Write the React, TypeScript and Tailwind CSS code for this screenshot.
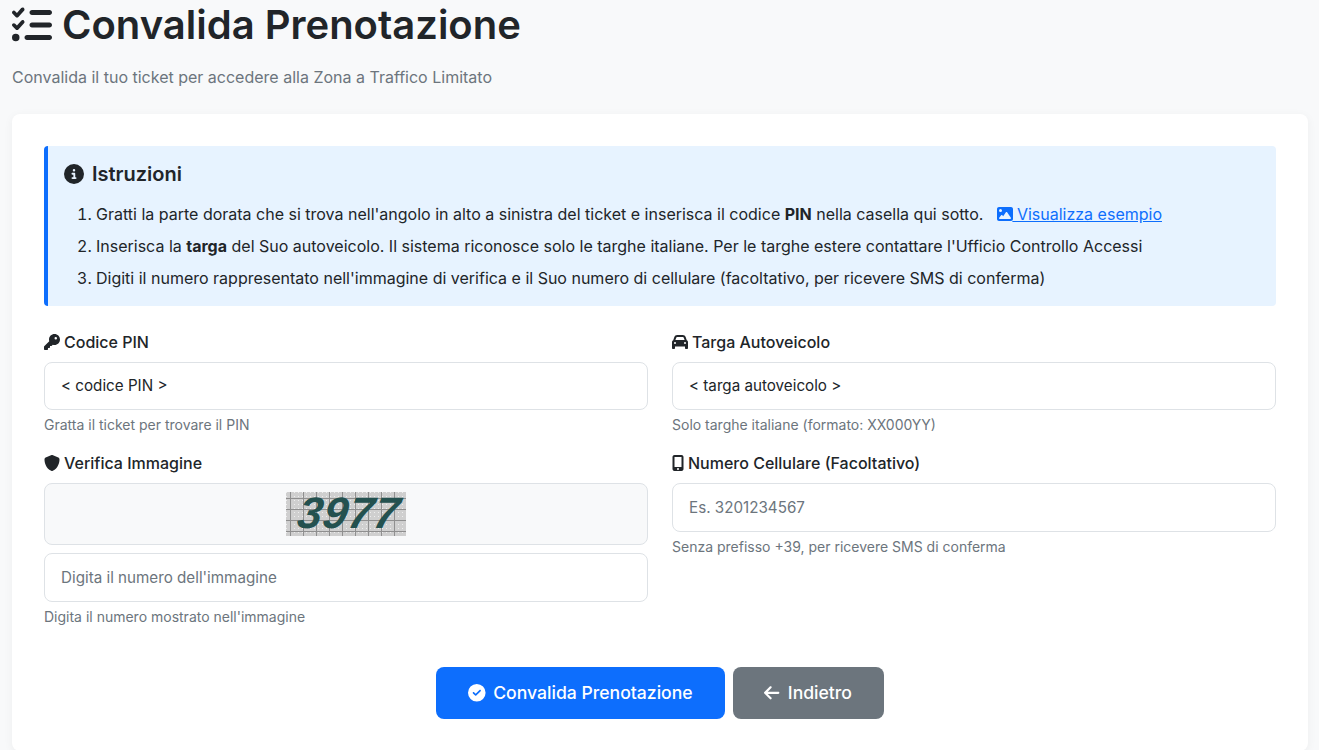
import { useState } from "react";
import type { ReactNode } from "react";
import {
  FaArrowLeft,
  FaCar,
  FaCircleCheck,
  FaCircleInfo,
  FaImage,
  FaKey,
  FaListCheck,
  FaMobileScreenButton,
  FaShield,
} from "react-icons/fa6";

type FieldProps = {
  icon: ReactNode;
  label: string;
  help: string;
  children: ReactNode;
};

function Field({ icon, label, help, children }: FieldProps) {
  return (
    <div className="flex flex-col">
      <label className="mb-2 flex h-6 items-center gap-1 text-[16px] font-medium text-[#212529]">
        {icon}
        {label}
      </label>
      {children}
      <div className="mt-1 text-[14px] leading-[21px] text-[#6c757d]">{help}</div>
    </div>
  );
}

function TextInput({ value, placeholder }: { value?: string; placeholder?: string }) {
  const [text, setText] = useState(value ?? "");
  return (
    <input
      type="text"
      value={text}
      placeholder={placeholder}
      onChange={(e) => setText(e.target.value)}
      className="w-full rounded-lg border border-[#dee2e6] bg-white px-4 pt-[12.6px] pb-[11.4px] text-[15.2px] leading-[22.8px] text-[#212529] outline-none placeholder:text-[#6c757d]"
    />
  );
}

function Captcha() {
  const cols = Array.from({ length: 9 }, (_, i) => 4 + i * 13);
  const rows = Array.from({ length: 4 }, (_, i) => 6 + i * 11);
  return (
    <svg width="120" height="44" viewBox="0 0 120 44" className="block overflow-visible">
      <defs>
        <pattern id="dots" width="4" height="4" patternUnits="userSpaceOnUse">
          <rect width="4" height="4" fill="#cfcfcf" />
          <rect width="1" height="1" fill="#eeeeee" />
        </pattern>
      </defs>
      <rect width="120" height="44" fill="url(#dots)" />
      {cols.map((x) => (
        <line key={x} x1={x + 0.5} y1="0" x2={x + 0.5} y2="44" stroke="#8f8f8f" strokeWidth="1" />
      ))}
      {rows.map((y) => (
        <line key={y} x1="0" y1={y + 0.5} x2="120" y2={y + 0.5} stroke="#8f8f8f" strokeWidth="1" />
      ))}
      <text
        x="16"
        y="36"
        transform="skewX(-10)"
        fontFamily="'Liberation Sans', sans-serif"
        fontSize="44"
        fontStyle="italic"
        fontWeight="700"
        fill="#24514f"
        letterSpacing="1"
      >
        3977
      </text>
    </svg>
  );
}

export default function App() {
  return (
    <div className="min-h-screen w-[1320px] overflow-hidden bg-[#f8f9fa] px-3 font-['Inter',sans-serif] text-[#212529]">
      <h1 className="flex h-[50px] items-center gap-2.5 text-[40px] font-semibold leading-[48px] text-[#212529]">
        <FaListCheck className="h-10 w-10" />
        Convalida Prenotazione
      </h1>
      <p className="mt-[15px] text-[16px] leading-6 text-[#6c757d]">
        Convalida il tuo ticket per accedere alla Zona a Traffico Limitato
      </p>

      <div className="mt-[25px] rounded-lg bg-white p-8 shadow-[0_2px_10px_rgba(0,0,0,0.05)]">
        <div className="rounded-[4px] border-l-4 border-[#0d6efd] bg-[#e7f3ff] p-4">
          <h5 className="mb-4 flex h-6 items-center gap-2 text-[20px] font-semibold text-[#212529]">
            <FaCircleInfo className="h-5 w-5" />
            Istruzioni
          </h5>
          <ol className="list-decimal pl-8 text-[16px] leading-[24px]">
            <li className="mb-2">
              Gratti la parte dorata che si trova nell'angolo in alto a sinistra del ticket e
              inserisca il codice <strong className="font-bold">PIN</strong> nella casella qui
              sotto.
              <a href="#" className="ml-[14px] text-[#0d6efd] underline">
                <FaImage className="mr-[-1px] inline h-4 w-4 align-[-2px]" /> Visualizza esempio
              </a>
            </li>
            <li className="mb-2">
              Inserisca la <strong className="font-bold">targa</strong> del Suo autoveicolo. Il
              sistema riconosce solo le targhe italiane. Per le targhe estere contattare l'Ufficio
              Controllo Accessi
            </li>
            <li>
              Digiti il numero rappresentato nell'immagine di verifica e il Suo numero di cellulare
              (facoltativo, per ricevere SMS di conferma)
            </li>
          </ol>
        </div>

        <div className="mt-[23.6px] grid grid-cols-2 items-start gap-x-6 gap-y-4">
          <Field
            icon={<FaKey className="h-4 w-4" />}
            label="Codice PIN"
            help="Gratta il ticket per trovare il PIN"
          >
            <TextInput value="< codice PIN >" />
          </Field>
          <Field
            icon={<FaCar className="h-4 w-4" />}
            label="Targa Autoveicolo"
            help="Solo targhe italiane (formato: XX000YY)"
          >
            <TextInput value="< targa autoveicolo >" />
          </Field>
          <Field
            icon={<FaShield className="h-4 w-4" />}
            label="Verifica Immagine"
            help="Digita il numero mostrato nell'immagine"
          >
            <div className="mb-2 flex h-[62px] items-center justify-center rounded-lg border border-[#dee2e6] bg-[#f8f9fa]">
              <Captcha />
            </div>
            <TextInput placeholder="Digita il numero dell'immagine" />
          </Field>
          <Field
            icon={<FaMobileScreenButton className="h-4 w-3" />}
            label="Numero Cellulare (Facoltativo)"
            help="Senza prefisso +39, per ricevere SMS di conferma"
          >
            <TextInput placeholder="Es. 3201234567" />
          </Field>
        </div>

        <div className="mt-10 flex justify-center gap-2">
          <button className="flex h-[52px] items-center gap-[7.4px] rounded-lg bg-[#0d6efd] px-[32px] text-[17.6px] font-medium text-white">
            <FaCircleCheck className="h-[17.6px] w-[17.6px]" />
            Convalida Prenotazione
          </button>
          <button className="flex h-[52px] items-center gap-2 rounded-lg bg-[#6c757d] px-[31.8px] text-[17.6px] font-medium text-white">
            <FaArrowLeft className="h-[17.6px] w-[15.4px]" />
            Indietro
          </button>
        </div>
      </div>
    </div>
  );
}
